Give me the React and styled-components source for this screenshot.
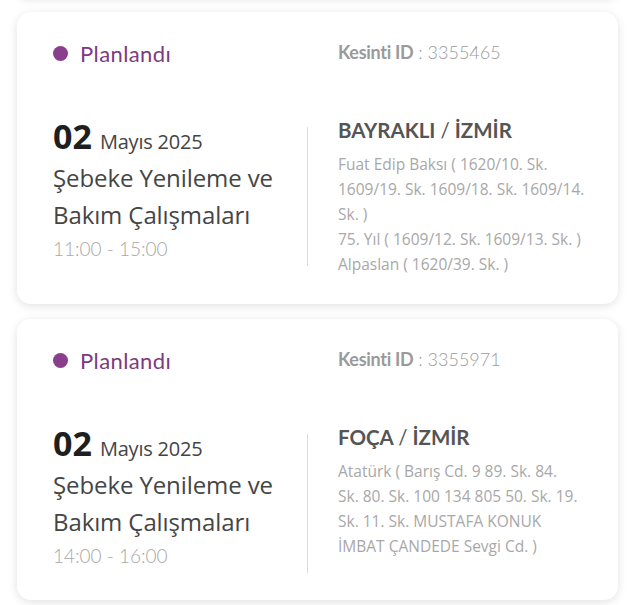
import React from "react";
import styled, { createGlobalStyle } from "styled-components";

const GlobalStyle = createGlobalStyle`
  html, body {
    margin: 0;
    padding: 0;
    background: #ffffff;
  }
  body {
    font-family: "Lato", "Noto Sans", sans-serif;
    overflow: hidden;
  }
`;

const Page = styled.div`
  width: 628px;
  height: 605px;
  overflow: hidden;
`;

const List = styled.div`
  display: flex;
  flex-direction: column;
  gap: 15px;
  padding: 0 10px 0 17px;
`;

const Card = styled.article`
  width: 601px;
  box-sizing: border-box;
  background: #fff;
  border-radius: 14px;
  box-shadow: 0 2px 10px rgba(0, 0, 0, 0.12);
  padding: 28px 20px 27px 36px;
`;

/* bottom edge of the previous card, scrolled out of view */
const CardTail = styled(Card)`
  height: 20px;
  margin-top: -23px;
  padding: 0;
`;

const Header = styled.div`
  display: grid;
  grid-template-columns: 285px 1fr;
  align-items: center;
  height: 24px;
`;

const Status = styled.div`
  display: flex;
  align-items: center;
  gap: 12px;
  color: #7d3a80;
  font-size: 22px;
  letter-spacing: 0.4px;
  font-family: "Lato", sans-serif;
`;

const Dot = styled.span`
  width: 15px;
  height: 15px;
  border-radius: 50%;
  background: ${(p) => p.$color};
`;

const OutageId = styled.div`
  font-size: 18px;
  color: #9a9a9a;
  font-weight: 300;
  margin-top: -3px;

  b {
    font-weight: 700;
    letter-spacing: -0.3px;
  }
`;

const Body = styled.div`
  display: grid;
  grid-template-columns: 254px 1px 1fr;
  margin-top: 52px;
  align-items: start;
`;

const DateCol = styled.div`
  font-family: "Open Sans", "Noto Sans", sans-serif;
`;

const DateLine = styled.div`
  display: flex;
  align-items: baseline;
  gap: 8px;
  height: 43px;
`;

const Day = styled.span`
  font-size: 34px;
  font-weight: 700;
  color: #1f1f1f;
  line-height: 40px;
`;

const Month = styled.span`
  font-size: 20px;
  color: #444;
  letter-spacing: -0.2px;
`;

const Title = styled.div`
  font-size: 24px;
  line-height: 37px;
  color: #454545;
  letter-spacing: -0.1px;
`;

const Time = styled.div`
  font-family: "Lato", sans-serif;
  font-weight: 300;
  font-size: 19px;
  line-height: 28px;
  margin-top: 2px;
  color: #a8a8a8;
`;

const Divider = styled.div`
  width: 1px;
  height: 139px;
  margin-top: 11px;
  background: #dcdcdc;
`;

const PlaceCol = styled.div`
  padding-left: 30px;
`;

const Place = styled.div`
  font-size: 20.5px;
  font-weight: 700;
  line-height: 28px;
  color: #555;
  margin-bottom: 8px;

  span {
    font-weight: 400;
  }
`;

const Streets = styled.div`
  font-family: "Open Sans", sans-serif;
  font-size: 15.5px;
  font-weight: 400;
  line-height: 25px;
  color: #a8a8a8;
`;

const StreetLine = styled.div`
  white-space: nowrap;
`;

const outages = [
  {
    id: "3355465",
    day: "02",
    month: "Mayıs 2025",
    time: "11:00 - 15:00",
    district: "BAYRAKLI",
    city: "İZMİR",
    lines: [
      "Fuat Edip Baksı ( 1620/10. Sk.",
      "1609/19. Sk. 1609/18. Sk. 1609/14.",
      "Sk. )",
      "75. Yıl ( 1609/12. Sk. 1609/13. Sk. )",
      "Alpaslan ( 1620/39. Sk. )",
    ],
  },
  {
    id: "3355971",
    day: "02",
    month: "Mayıs 2025",
    time: "14:00 - 16:00",
    district: "FOÇA",
    city: "İZMİR",
    lines: [
      "Atatürk ( Barış Cd. 9 89. Sk. 84.",
      "Sk. 80. Sk. 100 134 805 50. Sk. 19.",
      "Sk. 11. Sk. MUSTAFA KONUK",
      "İMBAT ÇANDEDE Sevgi Cd. )",
    ],
  },
];

const OutageCard = ({ o }) => (
  <Card>
    <Header>
      <Status>
        <Dot $color="#8a3f8c" />
        Planlandı
      </Status>
      <OutageId>
        <b>Kesinti ID</b> : {o.id}
      </OutageId>
    </Header>
    <Body>
      <DateCol>
        <DateLine>
          <Day>{o.day}</Day>
          <Month>{o.month}</Month>
        </DateLine>
        <Title>
          Şebeke Yenileme ve
          <br />
          Bakım Çalışmaları
        </Title>
        <Time>{o.time}</Time>
      </DateCol>
      <Divider />
      <PlaceCol>
        <Place>
          {o.district} <span>/</span> {o.city}
        </Place>
        <Streets>
          {o.lines.map((s) => (
            <StreetLine key={s}>{s}</StreetLine>
          ))}
        </Streets>
      </PlaceCol>
    </Body>
  </Card>
);

export default function App() {
  return (
    <Page>
      <GlobalStyle />
      <List>
        <CardTail />
        {outages.map((o) => (
          <OutageCard key={o.id} o={o} />
        ))}
      </List>
    </Page>
  );
}
